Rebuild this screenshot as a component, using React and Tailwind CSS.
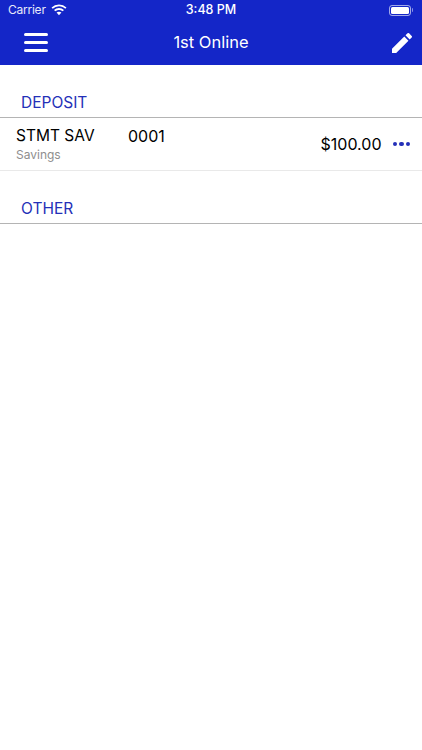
const font = "font-['Inter','Liberation_Sans',sans-serif]";

const Wifi = () => (
  <svg width="16" height="12" viewBox="0 0 16 12" className="ml-[5px] -mt-[1px] scale-110">
    <path d="M8 2.6c2.2 0 4.2.9 5.7 2.3l1.1-1.2A9.9 9.9 0 0 0 8 1 9.9 9.9 0 0 0 1.2 3.7l1.1 1.2A8.2 8.2 0 0 1 8 2.6z" fill="#fff" />
    <path d="M8 5.9c1.3 0 2.5.5 3.4 1.3l1.1-1.2A6.6 6.6 0 0 0 8 4.2c-1.7 0-3.3.7-4.5 1.8l1.1 1.2c.9-.8 2.1-1.3 3.4-1.3z" fill="#fff" />
    <path d="M8 7.5c-.9 0-1.6.3-2.2.8L8 10.8l2.2-2.5c-.6-.5-1.3-.8-2.2-.8z" fill="#fff" />
  </svg>
);

const Battery = () => (
  <div className="flex items-center">
    <div className="w-[22px] h-[11px] rounded-[3px] border border-white/60 p-px">
      <div className="w-full h-full bg-white rounded-[1.5px]" />
    </div>
    <div className="w-px h-1 bg-white/50 ml-px rounded-r" />
  </div>
);

const Pencil = () => (
  <svg width="20" height="20" viewBox="3 3 18 18" fill="#fff">
    <path d="M3 17.25V21h3.75L17.81 9.94l-3.75-3.75L3 17.25zM20.71 7.04a1 1 0 0 0 0-1.41l-2.34-2.34a1 1 0 0 0-1.41 0l-1.83 1.83 3.75 3.75 1.83-1.83z" />
  </svg>
);

const SectionHeader = ({ title }) => (
  <div className="h-[41px] mt-[12px] pl-[21px] flex items-end pb-[3px] border-b border-[#b4b4b4] text-[#2430b8] text-[15.5px]">
    {title}
  </div>
);

export default function App() {
  return (
    <div className={`w-[422px] h-[750px] bg-white overflow-hidden ${font}`}>
      <header className="h-[65px] bg-[#1426c8] text-white">
        <div className="h-[20px] px-2 flex items-center justify-between text-[12px]">
          <div className="w-[100px] flex items-center">
            <span className="opacity-90 tracking-[-0.02em]">Carrier</span>
            <Wifi />
          </div>
          <span className="font-medium text-[12.5px]">3:48 PM</span>
          <div className="w-[100px] flex justify-end pr-px">
            <Battery />
          </div>
        </div>
        <div className="h-[45px] pl-6 pr-[10px] flex items-center">
          <div className="w-[60px]">
            <div className="w-6 flex flex-col gap-[5px] -mt-[1px]">
              <div className="h-[3px] bg-white rounded-sm" />
              <div className="h-[3px] bg-white rounded-sm" />
              <div className="h-[3px] bg-white rounded-sm" />
            </div>
          </div>
          <h1 className="flex-1 text-center pr-[14px] text-[16.5px] -mt-[1px]">1st Online</h1>
          <div className="w-[60px] flex justify-end">
            <Pencil />
          </div>
        </div>
      </header>

      <SectionHeader title="DEPOSIT" />

      <div className="h-[53px] pl-4 pr-[12px] flex items-center justify-between border-b border-[#e9e9e9]">
        <div>
          <div className="flex text-[15.5px] leading-[20px] text-black">
            <span className="w-[112px]">STMT SAV</span>
            <span className="text-[16px]">0001</span>
          </div>
          <div className="text-[12px] leading-[16px] mt-[1px] text-[#8e8e8e]">Savings</div>
        </div>
        <div className="flex items-center gap-[11px]">
          <span className="text-[16px] text-black">$100.00</span>
          <div className="flex gap-[2px]">
            <div className="size-[4.5px] rounded-full bg-[#2430b8]" />
            <div className="size-[4.5px] rounded-full bg-[#2430b8]" />
            <div className="size-[4.5px] rounded-full bg-[#2430b8]" />
          </div>
        </div>
      </div>

      <SectionHeader title="OTHER" />
    </div>
  );
}
